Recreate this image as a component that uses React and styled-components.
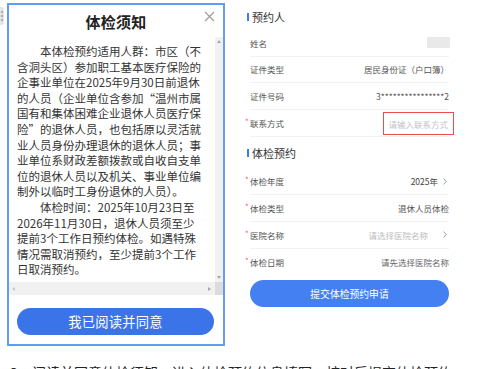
import React from "react";
import styled, { createGlobalStyle } from "styled-components";

const Global = createGlobalStyle`
  html, body { margin: 0; padding: 0; background: #fff; }
  body { font-family: "Noto Sans CJK SC", "Noto Sans", sans-serif; color: #333; }
  * { box-sizing: border-box; }
`;

const Page = styled.div`
  width: 499px;
  height: 369px;
  overflow: hidden;
  display: flex;
  flex-direction: column;
`;

const TopRow = styled.div`
  display: flex;
  align-items: flex-start;
`;

const Handle = styled.div`
  width: 4px;
  height: 18px;
  margin-top: 7px;
  background: #e4e4e4;
  border-radius: 0 3px 3px 0;
  display: flex;
  flex-direction: column;
  align-items: center;
  justify-content: center;
  gap: 2px;
  span { width: 2px; height: 2px; background: #9a9a9a; border-radius: 1px; }
`;

const Modal = styled.div`
  width: 218px;
  height: 343px;
  margin: 3px 0 0 3px;
  border: 2px solid #619df3;
  background: #fff;
  display: flex;
  flex-direction: column;
`;

const ModalHeader = styled.div`
  position: relative;
  height: 32px;
  display: flex;
  align-items: center;
  justify-content: center;
`;

const Title = styled.div`
  font-size: 15px;
  font-weight: 700;
  color: #222;
  letter-spacing: 0.3px;
  margin-top: 1px;
`;

const Close = styled.svg`
  position: absolute;
  right: 8px;
  top: 6px;
`;

const ScrollArea = styled.div`
  height: 258px;
  display: grid;
  grid-template-columns: 1fr 8px;
  grid-template-rows: 1fr 13px;
`;

const TextPane = styled.div`
  overflow: hidden;
  padding: 7px 0 0 8px;
  font-size: 11.5px;
  line-height: 15.6px;
  color: #333;
  white-space: nowrap;
`;

const Line = styled.div`
  padding-left: ${(p) => (p.$indent ? "2em" : "0")};
`;

const VBar = styled.div`
  background: #f1f1f1;
  display: flex;
  flex-direction: column;
  justify-content: space-between;
  align-items: center;
  padding: 3px 0;
`;

const HBar = styled.div`
  background: #f1f1f1;
  display: flex;
  justify-content: space-between;
  align-items: center;
  padding: 0 4px 0 3px;
`;

const Corner = styled.div`
  background: #dcdcdc;
`;

const Arrow = styled.div`
  width: 0;
  height: 0;
  border: 2.5px solid transparent;
  ${(p) => p.$dir === "up" && "border-bottom: 3px solid #a8a8a8; border-top-width: 0;"}
  ${(p) => p.$dir === "down" && "border-top: 3px solid #a8a8a8; border-bottom-width: 0;"}
  ${(p) => p.$dir === "left" && "border-right: 3px solid #c8c8c8; border-left-width: 0;"}
  ${(p) => p.$dir === "right" && "border-left: 3px solid #a8a8a8; border-right-width: 0;"}
`;

const AgreeButton = styled.button`
  margin: 13px 9px 0 8px;
  height: 27px;
  border: none;
  border-radius: 14px;
  background: #3b74e8;
  color: #fff;
  font-family: inherit;
  font-size: 13.3px;
  letter-spacing: 0.2px;
  display: flex;
  align-items: center;
  justify-content: center;
  padding: 0;
`;

const Panel = styled.div`
  width: 207px;
  margin-left: 22px;
  display: flex;
  flex-direction: column;
`;

const SectionHead = styled.div`
  height: ${(p) => p.$h}px;
  padding-top: ${(p) => p.$pt}px;
  display: flex;
  align-items: center;
  gap: 3px;
  font-size: 11px;
  color: #333;
  &::before {
    content: "";
    width: 2px;
    height: 8px;
    background: #3b7cf0;
  }
`;

const Row = styled.div`
  height: 26.67px;
  margin: 0 5px 0 3px;
  display: flex;
  align-items: center;
  justify-content: space-between;
  border-bottom: ${(p) => (p.$last ? "none" : "1px solid #f2f2f2")};
  font-size: 8.5px;
`;

const Label = styled.span`
  position: relative;
  color: #555;
  ${(p) =>
    p.$required &&
    `&::before {
      content: "*";
      position: absolute;
      left: -5px;
      top: -1px;
      color: #f4606c;
      font-size: 8px;
    }`}
`;

const Value = styled.span`
  display: flex;
  align-items: center;
  color: ${(p) => p.$color || "#555"};
`;

const Chevron = styled.svg`
  margin-left: ${(p) => p.$gap}px;
  margin-right: 2px;
`;

const NameMask = styled.span`
  width: 23px;
  height: 11px;
  background: #e9e9e9;
  margin-right: -1px;
`;

const InputBox = styled.span`
  width: 71px;
  height: 23px;
  margin-right: -5px;
  margin-top: 2px;
  border: 1.5px solid #ec4c4c;
  display: flex;
  align-items: center;
  justify-content: flex-end;
  padding-right: 5px;
  color: #c4c4c4;
  font-size: 8.5px;
`;

const SubmitButton = styled.button`
  margin: 5px 5px 0 3px;
  height: 27px;
  border: none;
  border-radius: 14px;
  background: #4580f3;
  color: #fff;
  font-family: inherit;
  font-size: 9.8px;
  padding: 0;
`;

const Footnote = styled.div`
  margin-top: 16px;
  display: flex;
  font-size: 14px;
  line-height: 20px;
  color: #222;
  white-space: nowrap;
`;

const Num = styled.span`
  margin-left: 10px;
  width: 22px;
`;

const para1 = [
  "本体检预约适用人群：市区（不",
  "含洞头区）参加职工基本医疗保险的",
  "企事业单位在2025年9月30日前退休",
  "的人员（企业单位含参加“温州市属",
  "国有和集体困难企业退休人员医疗保",
  "险”的退休人员，也包括原以灵活就",
  "业人员身份办理退休的退休人员；事",
  "业单位系财政差额拨款或自收自支单",
  "位的退休人员以及机关、事业单位编",
  "制外以临时工身份退休的人员）。",
];
const para2 = [
  "体检时间：2025年10月23日至",
  "2026年11月30日，退休人员须至少",
  "提前3个工作日预约体检。如遇特殊",
  "情况需取消预约，至少提前3个工作",
  "日取消预约。",
];

const ChevronIcon = ({ gap }) => (
  <Chevron $gap={gap} width="4" height="7" viewBox="0 0 4 7">
    <path d="M0.5 0.5 L3.3 3.5 L0.5 6.5" fill="none" stroke="#999" strokeWidth="0.9" />
  </Chevron>
);

export default function App() {
  return (
    <Page>
      <Global />
      <TopRow>
        <Handle>
          <span />
          <span />
          <span />
        </Handle>
        <Modal>
          <ModalHeader>
            <Title>体检须知</Title>
            <Close width="11" height="11" viewBox="0 0 11 11">
              <path d="M1 1 L10 10 M10 1 L1 10" stroke="#9a9a9a" strokeWidth="1.1" />
            </Close>
          </ModalHeader>
          <ScrollArea>
            <TextPane>
              {para1.map((t, i) => (
                <Line key={"a" + i} $indent={i === 0}>{t}</Line>
              ))}
              {para2.map((t, i) => (
                <Line key={"b" + i} $indent={i === 0}>{t}</Line>
              ))}
            </TextPane>
            <VBar>
              <Arrow $dir="up" />
              <Arrow $dir="down" />
            </VBar>
            <HBar>
              <Arrow $dir="left" />
              <Arrow $dir="right" />
            </HBar>
            <Corner />
          </ScrollArea>
          <AgreeButton>我已阅读并同意</AgreeButton>
        </Modal>
        <Panel>
          <SectionHead $h={30} $pt={4}>预约人</SectionHead>
          <Row>
            <Label>姓名</Label>
            <NameMask />
          </Row>
          <Row>
            <Label>证件类型</Label>
            <Value>居民身份证（户口簿）</Value>
          </Row>
          <Row>
            <Label>证件号码</Label>
            <Value>3****************2</Value>
          </Row>
          <Row>
            <Label $required>联系方式</Label>
            <InputBox>请输入联系方式</InputBox>
          </Row>
          <SectionHead $h={32} $pt={0}>体检预约</SectionHead>
          <Row>
            <Label $required>体检年度</Label>
            <Value $color="#444">
              2025年
              <ChevronIcon gap={5} />
            </Value>
          </Row>
          <Row>
            <Label $required>体检类型</Label>
            <Value>退休人员体检</Value>
          </Row>
          <Row>
            <Label $required>医院名称</Label>
            <Value $color="#bdbdbd">
              请选择医院名称
              <ChevronIcon gap={15} />
            </Value>
          </Row>
          <Row $last>
            <Label $required>体检日期</Label>
            <Value $color="#666">请先选择医院名称</Value>
          </Row>
          <SubmitButton>提交体检预约申请</SubmitButton>
        </Panel>
      </TopRow>
      <Footnote>
        <Num>3.</Num>
        <span>阅读并同意体检须知，进入体检预约信息填写，核对后提交体检预约</span>
      </Footnote>
    </Page>
  );
}
